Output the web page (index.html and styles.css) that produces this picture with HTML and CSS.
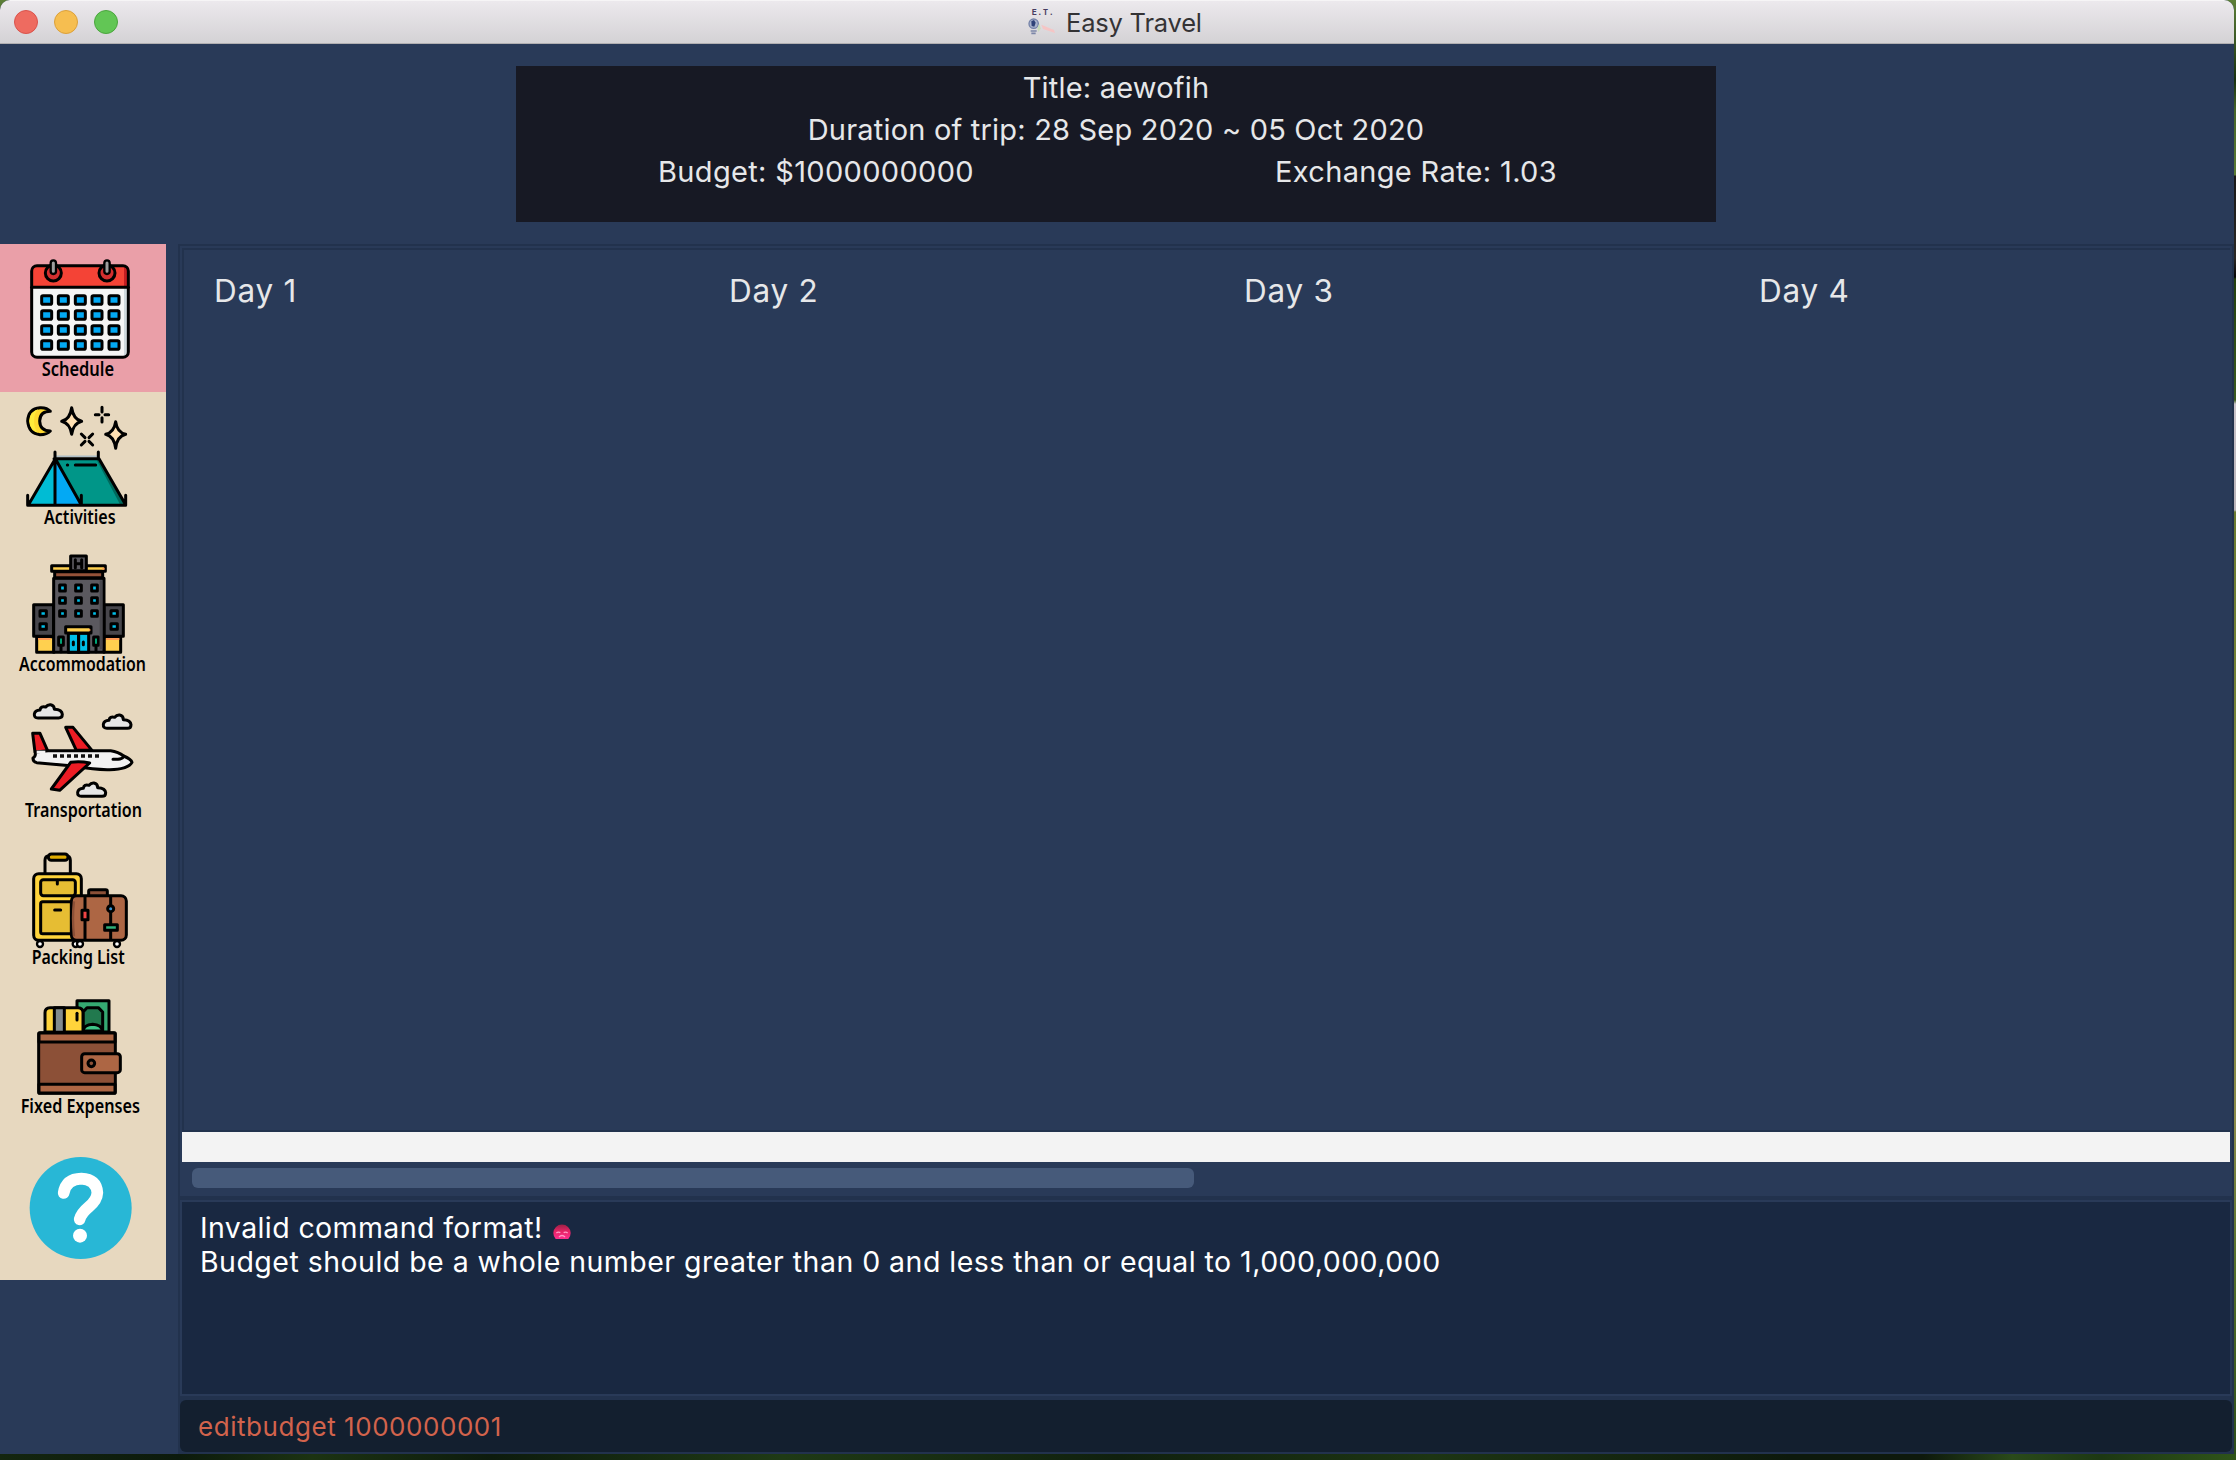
FILE: index.html
```html
<!DOCTYPE html>
<html lang="en">
<head>
<meta charset="utf-8">
<title>Easy Travel</title>
<link rel="stylesheet" href="styles.css">
</head>
<body>
<div class="window">
  <header class="titlebar">
    <div class="lights"><i class="light close"></i><i class="light minimise"></i><i class="light maximise"></i></div>
    <svg class="app-icon" viewBox="0 0 84 84">
      <text x="11" y="21" class="logo-text" textLength="66">E.T.</text>
      <circle cx="17" cy="47" r="14" fill="#a9b3cc" stroke="#7482a8" stroke-width="4"/>
      <path d="M10 40l8-4 5 8-4 12-8-2z" fill="#2f4278"/>
      <path d="M8 69h18M10 76h13" stroke="#7c86a8" stroke-width="5"/>
      <path d="M28 60l6-14 4 16-7 10z" fill="#c9dcb8"/>
      <path d="M40 50l38 16 3 9-36-12z" fill="#f5c5c5"/>
    </svg>
    <span class="app-name">Easy Travel</span>
  </header>

  <section class="summary">
    <div class="trip">
      <div class="trip-line">Title: aewofih</div>
      <div class="trip-line">Duration of trip: 28 Sep 2020 ~ 05 Oct 2020</div>
      <div class="trip-pair"><span>Budget: $1000000000</span><span>Exchange Rate: 1.03</span></div>
    </div>
  </section>

  <div class="content">
    <nav class="sidebar">
      <svg class="tab active" viewBox="0 12 498 444">
        <rect x="95" y="77" width="290" height="275" rx="16" fill="#f5f5f5"/>
        <path d="M372 142h13v194q0 16-13 16z" fill="#cfd8dc"/>
        <path d="M95 142V93q0-16 16-16h258q16 0 16 16v49z" fill="#f44336"/>
        <path d="M372 77q13 2 13 16v49h-13z" fill="#c41e22"/>
        <path d="M95 142h290" class="ln"/>
        <rect x="95" y="77" width="290" height="275" rx="16" class="ln"/>
        <g fill="#d32f2f" class="st"><circle cx="160" cy="99" r="24"/><circle cx="321" cy="99" r="24"/></g>
        <g fill="#9e9e9e" class="st7"><rect x="152" y="61" width="16" height="41" rx="8"/><rect x="313" y="61" width="16" height="41" rx="8"/></g>
        <g fill="#03a9f4" class="st">
          <rect x="125" y="167" width="30" height="26" rx="4"/><rect x="175" y="167" width="30" height="26" rx="4"/><rect x="226" y="167" width="30" height="26" rx="4"/><rect x="276" y="167" width="30" height="26" rx="4"/><rect x="327" y="167" width="30" height="26" rx="4"/>
          <rect x="125" y="212" width="30" height="26" rx="4"/><rect x="175" y="212" width="30" height="26" rx="4"/><rect x="226" y="212" width="30" height="26" rx="4"/><rect x="276" y="212" width="30" height="26" rx="4"/><rect x="327" y="212" width="30" height="26" rx="4"/>
          <rect x="125" y="257" width="30" height="26" rx="4"/><rect x="175" y="257" width="30" height="26" rx="4"/><rect x="226" y="257" width="30" height="26" rx="4"/><rect x="276" y="257" width="30" height="26" rx="4"/><rect x="327" y="257" width="30" height="26" rx="4"/>
          <rect x="125" y="302" width="30" height="26" rx="4"/><rect x="175" y="302" width="30" height="26" rx="4"/><rect x="226" y="302" width="30" height="26" rx="4"/><rect x="276" y="302" width="30" height="26" rx="4"/><rect x="327" y="302" width="30" height="26" rx="4"/>
        </g>
        <text x="125" y="409" textLength="217" lengthAdjust="spacingAndGlyphs">Schedule</text>
      </svg>

      <svg class="tab" viewBox="0 456 498 444">
        <path d="M151 514q-10-12-31-11-35 3-37 40 3 38 37 41 21 0 31-11-31 0-32-30 1-29 32-29z" fill="#ffd930" class="st"/>
        <path d="M115 507q-26 9-27 36 1 27 27 36-13-12-13-36t13-36z" fill="#ffeb3b"/>
        <path d="M215 503q5 35 30 41-25 6-30 39-5-33-30-39 25-6 30-41zM347 545q4 32 30 38-26 6-30 42-5-36-30-42 25-6 30-38z" fill="#ffe0b2" class="st"/>
        <path d="M306 502v14M306 533v13M286 524h11M315 524h11M244 582l11 11M267 604l11 11M278 582l-11 11M255 604l-11 11" class="ln"/>
        <path d="M166 656h131l79 139H244z" fill="#009688"/>
        <path d="M288 656h9l79 139h-15z" fill="#00695c"/>
        <path d="M166 656L85 795h81z" fill="#00bcd4"/>
        <path d="M166 656l78 139h-78z" fill="#03a9f4"/>
        <path d="M166 649h131" stroke="#b0bec5" stroke-width="5"/>
        <path d="M165 636v159M295 636v20M162 656h134M166 656L85 795M166 656l78 139M297 656l79 137M83 766v30h294v-30M244 766v30M226 675h61M202 675h1" class="ln"/>
        <text x="132" y="853" textLength="215" lengthAdjust="spacingAndGlyphs">Activities</text>
      </svg>

      <svg class="tab" viewBox="0 15 498 444">
        <g class="st">
          <rect x="101" y="209" width="60" height="95" fill="#47464b"/><rect x="312" y="209" width="58" height="95" fill="#47464b"/>
          <rect x="110" y="305" width="52" height="47" fill="#ffd04f"/><rect x="312" y="305" width="50" height="47" fill="#ffd04f"/>
          <rect x="161" y="130" width="151" height="222" fill="#5b595f"/>
          <rect x="164" y="110" width="144" height="18" fill="#955238"/>
          <rect x="155" y="92" width="161" height="17" fill="#ffd04f"/>
          <rect x="212" y="63" width="47" height="44" fill="#5b595f"/>
          <g fill="#00bfe8">
            <rect x="179" y="150" width="17" height="18"/><rect x="227" y="150" width="17" height="18"/><rect x="275" y="150" width="17" height="18"/>
            <rect x="179" y="188" width="17" height="17"/><rect x="227" y="188" width="17" height="17"/><rect x="275" y="188" width="17" height="17"/>
            <rect x="179" y="227" width="17" height="17"/><rect x="227" y="227" width="17" height="17"/><rect x="275" y="227" width="17" height="17"/>
            <rect x="120" y="227" width="19" height="17"/><rect x="333" y="227" width="19" height="17"/>
            <rect x="120" y="266" width="19" height="17"/><rect x="333" y="266" width="19" height="17"/>
            <rect x="205" y="295" width="31" height="57"/><rect x="236" y="295" width="30" height="57"/>
          </g>
          <rect x="197" y="275" width="76" height="19" fill="#ffd04f"/>
          <rect x="176" y="306" width="14" height="25" fill="#00c58e"/><rect x="281" y="306" width="14" height="25" fill="#00c58e"/>
        </g>
        <path d="M114 312h38M318 312h40M307 101h7M267 285h4" stroke="#ff9a54" stroke-width="6"/>
        <path d="M303 136v207" stroke="#47464b" stroke-width="8"/>
        <path d="M226 74v24M245 74v24M226 86h19M183 332v18M288 332v18M220 321v8M250 321v8" class="ln"/>
        <text x="57" y="408" textLength="381" lengthAdjust="spacingAndGlyphs">Accommodation</text>
      </svg>

      <svg class="tab" viewBox="0 459 498 444">
        <g fill="#e6e6e6" class="st">
          <path d="M114 549q-12 0-11-12 2-11 17-12 2-13 17-9 6-8 15-7 11 2 11 14 23 1 24 15 0 11-11 11z"/>
          <path d="M321 580q-12 0-11-12 2-11 17-12 2-13 17-9 6-8 15-7 11 2 11 14 22 1 23 15 0 11-11 11z"/>
          <path d="M244 784q-12 0-11-12 2-11 17-12 2-13 17-9 6-8 15-7 11 2 11 14 23 1 24 15 0 11-11 11z"/>
        </g>
        <g class="st">
          <path d="M197 577h22l57 69h-47z" fill="#ed1c24"/>
          <path d="M98 595h22l25 57h-40z" fill="#ed1c24"/>
          <path d="M106 651l38-4h188q23 3 39 16 23 10 25 19-11 21-67 22-44 1-101-10l-118-11q-12-3-11-14 9-5 7-18z" fill="#f2f2f2"/>
          <path d="M212 682q28-4 57 2l-90 82-25-4z" fill="#ed1c24"/>
          <path d="M339 673h15q12-1 16-7" fill="none"/>
        </g>
        <path d="M110 651h26" stroke="#f2f2f2" stroke-width="8"/>
        <path d="M159 663h145" stroke="#111" stroke-width="11" stroke-dasharray="12 9"/>
        <text x="75" y="845" textLength="351" lengthAdjust="spacingAndGlyphs">Transportation</text>
      </svg>

      <svg class="tab" viewBox="0 18 498 444">
        <path d="M135 128V91q0-14 13-14h50q13 0 13 14v37" class="ln"/>
        <rect x="145" y="72" width="59" height="19" rx="9" fill="#e0ac00" class="st"/>
        <g fill="#fff" class="st7"><circle cx="120" cy="342" r="9"/><circle cx="227" cy="342" r="9"/><circle cx="240" cy="342" r="9"/><circle cx="351" cy="342" r="9"/></g>
        <g class="st">
          <rect x="101" y="131" width="143" height="200" rx="15" fill="#ffd43b"/>
          <rect x="122" y="149" width="104" height="48" rx="8" fill="#e6bd33"/>
          <rect x="122" y="215" width="104" height="96" rx="6" fill="#e6bd33"/>
          <rect x="266" y="179" width="56" height="22" rx="5" fill="#8c5037"/>
          <rect x="214" y="197" width="165" height="134" rx="16" fill="#ad6644"/>
        </g>
        <path d="M222 214q-6 50 0 105" fill="none" stroke="#8c5037" stroke-width="7"/>
        <path d="M172 151v11M164 240h18M332 200v128" class="ln"/>
        <path d="M255 200v128" class="ln"/>
        <g class="st"><rect x="246" y="241" width="18" height="28" fill="#f04444"/><circle cx="332" cy="236" r="9" fill="#3b97d6"/><rect x="314" y="284" width="38" height="17" fill="#30ae78"/></g>
        <text x="95" y="403" textLength="279" lengthAdjust="spacingAndGlyphs">Packing List</text>
      </svg>

      <svg class="tab" viewBox="0 462 498 444">
        <g class="st">
          <path d="M231 606v-94h96v94z" fill="#35a972"/>
          <path d="M249 606v-60l12-13h34l13 13v60z" fill="#21794e"/>
          <path d="M249 603q2-18 29-20 26 1 30 20z" fill="#3ec487"/>
          <path d="M135 606v-58q0-15 15-15h84q15 0 15 15v58z" fill="#ffd43b"/>
          <rect x="163" y="533" width="30" height="74" fill="#828b8d"/>
          <path d="M231 550v20" fill="none"/>
          <rect x="116" y="608" width="230" height="182" rx="5" fill="#8c5037"/>
          <path d="M117 609h228v27H117zM117 763h228v26H117z" fill="#ad6644"/>
          <rect x="245" y="671" width="116" height="57" rx="9" fill="#ad6644"/>
          <circle cx="274" cy="700" r="10" fill="#8c5037"/>
        </g>
        <text x="62" y="849" textLength="358" lengthAdjust="spacingAndGlyphs">Fixed Expenses</text>
      </svg>

      <svg class="tab" viewBox="0 21 498 444">
        <circle cx="242" cy="249" r="153" fill="#28b7d6"/>
        <path d="M191 204q7-42 53-43 45 2 48 42-1 22-25 42-24 20-28 38" fill="none" stroke="#fff" stroke-width="35" stroke-linecap="round"/>
        <circle cx="240" cy="332" r="21" fill="#fff"/>
      </svg>
    </nav>

    <main class="main">
      <section class="schedule">
        <div class="days"><span>Day 1</span><span>Day 2</span><span>Day 3</span><span>Day 4</span></div>
        <div class="blank"></div>
        <div class="scroll"><div class="thumb"></div></div>
      </section>
      <section class="result">
        <p class="r-first">Invalid command format!<svg class="face" viewBox="0 0 54 48">
            <defs><linearGradient id="faceTint" x2="0" y2="1"><stop offset="0" stop-color="#9c2044"/><stop offset=".5" stop-color="#e82467"/><stop offset="1" stop-color="#fb2f8e"/></linearGradient></defs>
            <path d="M8 48A26 26 0 1 1 46 48z" fill="url(#faceTint)"/>
            <path d="M10 30q6-5 12-1M32 29q6-4 12 1M18 42q9-9 18 0" fill="none" stroke="#ff9ac4" stroke-width="4"/>
          </svg></p>
        <p>Budget should be a whole number greater than 0 and less than or equal to 1,000,000,000</p>
      </section>
      <div class="command"><span>editbudget 1000000001</span></div>
    </main>
  </div>
</div>
</body>
</html>
```
FILE: styles.css
```css
* { box-sizing: border-box; }

body {
  margin: 0;
  width: 2236px;
  height: 1460px;
  overflow: hidden;
  font-family: Inter, sans-serif;
  background:
    linear-gradient(90deg, #14260f, #0c1a0c 8%, #1c3312 14%, #0d1b0d 22%, #1f3a15 35%, #10200e 50%, #1d3513 64%, #0d190c 80%, #0e190c 86%, #2a4a1a 90%, #1d3813 94%, #2f5419) 0 1454px / 100% 6px no-repeat,
    linear-gradient(#5d7f38, #17300f 80px, #46652a 110px, #5a7a35 175px, #181818 176px, #2a2825 258px, #050505 277px, #23400f 279px, #3a5a1f 400px, #c9c3c9 404px, #b9b3b9 510px, #6a7a30 512px, #7f8a3c 900px, #8a8a4a 1120px, #55702c 1260px, #2b4c1a);
}

.window {
  width: 2234px;
  height: 1454px;
  display: flex;
  flex-direction: column;
  background: #293a58;
  border-radius: 10px 10px 0 0;
  overflow: hidden;
}

.titlebar {
  height: 44px;
  display: flex;
  align-items: center;
  background: linear-gradient(#ece9ed, #d4d2d5);
  border-top: 1px solid #f6f5f6;
  border-bottom: 1px solid #b1afb1;
}
.lights { display: flex; gap: 16px; width: 1028px; padding-left: 14px; }
.light { width: 24px; height: 24px; border-radius: 50%; border: 1px solid; }
.close { background: #ee6b60; border-color: #d9534c; }
.minimise { background: #f6be50; border-color: #dba03b; }
.maximise { background: #62c655; border-color: #4ba53e; }
.app-icon { width: 28px; height: 28px; }
.logo-text { font: bold 25px "Liberation Mono", monospace; fill: #463c60; }
.app-name { margin-left: 10px; padding-top: 2px; font-size: 25.5px; line-height: 32px; color: #343335; letter-spacing: -.2px; white-space: nowrap; }

.summary { height: 200px; padding: 22px 0 0 516px; }
.trip { width: 1200px; height: 156px; padding-top: 1px; background: #171924; color: #e6e7e9; font-size: 29px; line-height: 42px; white-space: nowrap; letter-spacing: .2px; }
.trip-line { text-align: center; }
.trip-pair { display: grid; grid-template-columns: 1fr 1fr; text-align: center; letter-spacing: .33px; }

.content { flex: 1; display: flex; }
.sidebar { width: 166px; display: flex; flex-direction: column; }
.tab { width: 166px; height: 148px; background: #e7d8bf; overflow: visible; }
.tab.active { background: #ea9fa8; }
.tab text { font: 600 57px "Noto Sans", sans-serif; fill: #000; }
.ln { fill: none; stroke: #000; stroke-width: 9; stroke-linecap: round; stroke-linejoin: round; }
.st { stroke: #000; stroke-width: 9; stroke-linejoin: round; stroke-linecap: round; }
.st7 { stroke: #000; stroke-width: 7; }

.main {
  flex: 1;
  min-width: 0;
  margin-left: 12px;
  padding: 2px;
  background: #22324d;
  display: flex;
  flex-direction: column;
}
.schedule { height: 950px; padding: 2px; margin-bottom: 4px; background: #293a58; }
.days {
  height: 884px;
  border: 2px solid #22324d;
  border-right: 0;
  padding: 19px 0 0 30px;
  display: grid;
  grid-template-columns: repeat(3, 515px) 1fr;
  font-size: 31.5px;
  line-height: 44px;
  letter-spacing: .75px;
  color: #e6e7e9;
}
.blank { height: 30px; background: #f3f3f3; }
.scroll { padding: 6px 0 0 10px; }
.thumb { width: 1002px; height: 20px; border-radius: 6px; background: #465a7a; }

.result { height: 196px; border: 2px solid #293a58; background: #192841; padding: 9px 0 0 18px; color: #fff; font-size: 28.5px; line-height: 34px; letter-spacing: .47px; white-space: nowrap; }
.result p { margin: 0; height: 34px; }
.result .r-first { letter-spacing: .4px; }
.face { width: 18px; height: 16px; margin-left: 10px; vertical-align: -1px; }

.command { flex: 1; margin-top: 4px; padding: 2px 0 0 18px; display: flex; align-items: center; background: #131f2f; border-radius: 6px; color: #d2634c; font-size: 26px; line-height: 34px; letter-spacing: .55px; }
```
